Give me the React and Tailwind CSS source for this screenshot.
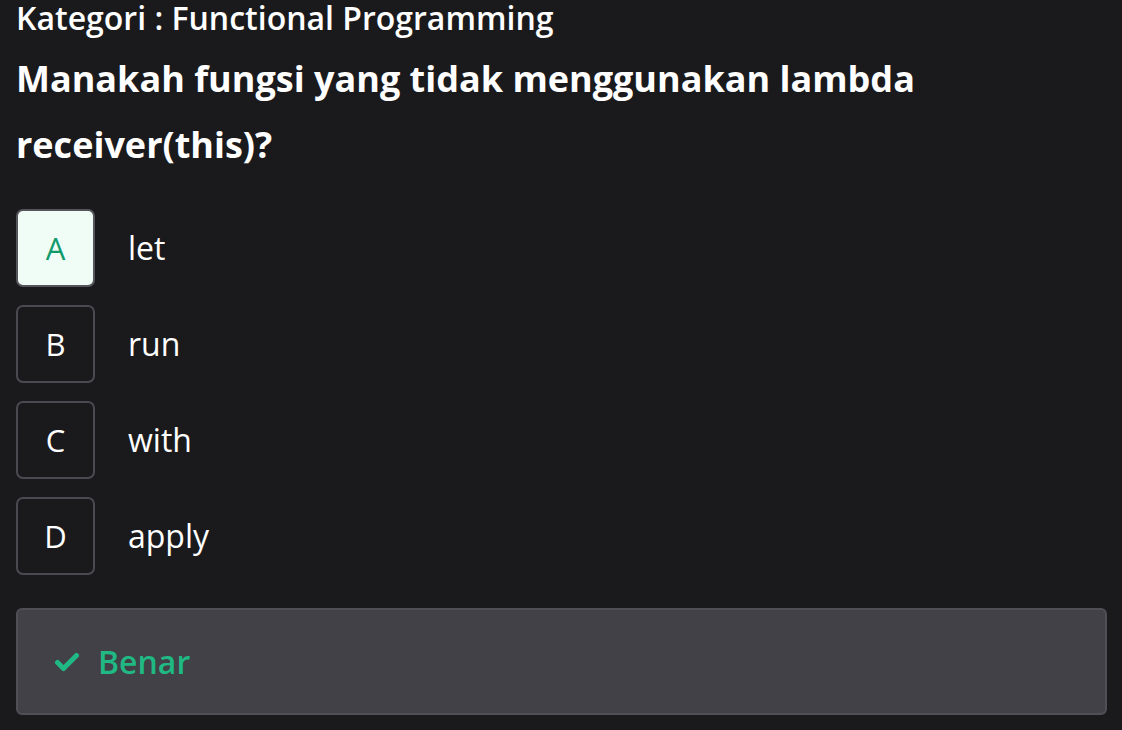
import React from 'react';

const options = [
  { key: 'A', label: 'let', selected: true },
  { key: 'B', label: 'run' },
  { key: 'C', label: 'with' },
  { key: 'D', label: 'apply' },
];

export default function App() {
  return (
    <div
      className="min-h-screen w-full bg-[#1a1a1d] text-white pl-[16px] pr-[15px]"
      style={{ fontFamily: '"Open Sans", sans-serif' }}
    >
      {/* Category */}
      <p className="text-[32px] font-semibold leading-[35px] whitespace-nowrap">Kategori : Functional Programming</p>

      {/* Question */}
      <h1 className="mt-[11px] text-[36px] font-bold leading-[66px] max-w-[1000px]">
        Manakah fungsi yang tidak menggunakan lambda receiver(this)?
      </h1>

      {/* Options */}
      <div className="mt-[31px] flex flex-col gap-[18px]">
        {options.map((o) => (
          <div key={o.key} className="flex items-center">
            <div
              className={
                o.selected
                  ? 'w-[79px] h-[78px] rounded-[7px] border-2 border-[#55555c] bg-[#effdf6] text-[#0f9a6c] flex items-center justify-center text-[31px]'
                  : 'w-[79px] h-[78px] rounded-[7px] border-2 border-[#4a4a50] text-white flex items-center justify-center text-[31px]'
              }
            >
              {o.key}
            </div>
            <span className="ml-[33px] text-[32px]">{o.label}</span>
          </div>
        ))}
      </div>

      {/* Result */}
      <div className="mt-[33px] h-[107px] rounded-[6px] border-2 border-[#4f4f55] bg-[#414147] flex items-center pl-[36px]">
        <svg className="w-[26px] h-[22px] text-[#20b883]" viewBox="0 0 26 22" fill="none">
          <path d="M3.5 11.5l6 6L22.5 4.5" stroke="currentColor" strokeWidth="5" strokeLinecap="round" strokeLinejoin="round" />
        </svg>
        <span className="ml-[18px] text-[32px] font-semibold text-[#20b883]">Benar</span>
      </div>
    </div>
  );
}
